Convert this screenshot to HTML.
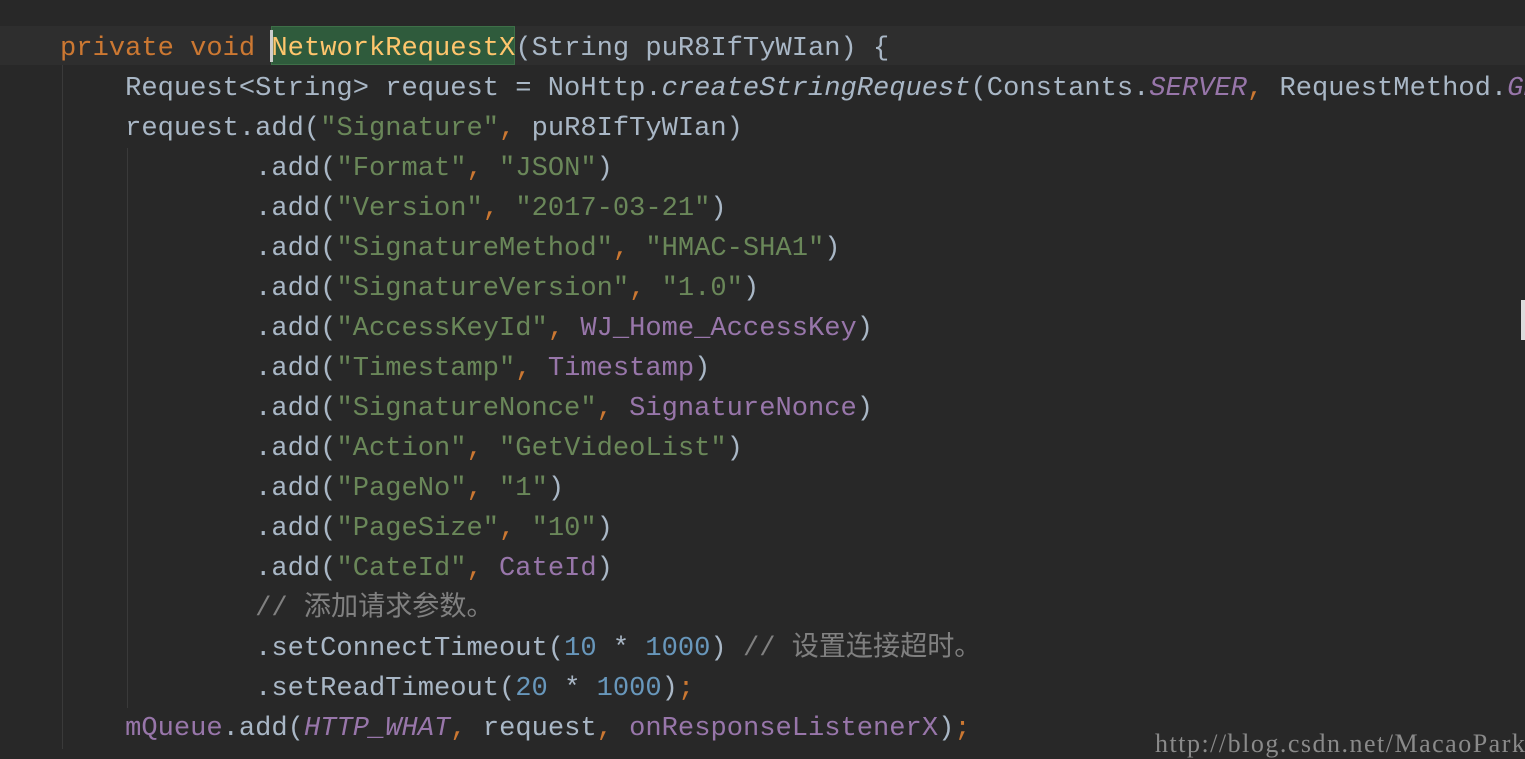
<!DOCTYPE html>
<html><head><meta charset="utf-8"><style>
body{margin:0;width:1525px;height:749px;background:#282828;overflow:hidden;position:relative;font-family:"Liberation Mono","Noto Sans CJK SC",monospace;font-size:27.1px;color:#a9b7c6}
.l{position:absolute;left:-5px;height:40px;line-height:40px;white-space:pre}
.k{color:#cc7832}.s{color:#6a8759}.p{color:#9876aa}.n{color:#6897bb}.c{color:#808080}.i{font-style:italic}
.g{position:absolute;width:1px;background:#3a3a3a}
</style></head><body>
<div style="position:absolute;left:0;top:26px;width:1525px;height:39px;background:#2e2e2e"></div>
<div style="position:absolute;left:271px;top:26px;width:244px;height:39px;background:#2f5b3c;border:1px solid #3e7048;box-sizing:border-box"></div>
<div style="position:absolute;left:270px;top:30px;width:3px;height:32px;background:#ccc"></div>
<div class="g" style="left:62px;top:65px;height:684px"></div>
<div class="g" style="left:127px;top:148px;height:560px"></div>
<div style="position:absolute;left:1521px;top:300px;width:4px;height:40px;background:#ddd"></div>
<div class="l" style="top:29px">    <span class="k">private void </span><span style="color:#ffc66d">NetworkRequestX</span>(String puR8IfTyWIan) {</div>
<div class="l" style="top:69px">        Request&lt;String&gt; request = NoHttp.<span class="i">createStringRequest</span>(Constants.<span class="p i">SERVER</span><span class="k">, </span>RequestMethod.<span class="p i">GET</span>)<span class="k">;</span></div>
<div class="l" style="top:109px">        request.add(<span class="s">"Signature"</span><span class="k">, </span>puR8IfTyWIan)</div>
<div class="l" style="top:149px">                .add(<span class="s">"Format"</span><span class="k">, </span><span class="s">"JSON"</span>)</div>
<div class="l" style="top:189px">                .add(<span class="s">"Version"</span><span class="k">, </span><span class="s">"2017-03-21"</span>)</div>
<div class="l" style="top:229px">                .add(<span class="s">"SignatureMethod"</span><span class="k">, </span><span class="s">"HMAC-SHA1"</span>)</div>
<div class="l" style="top:269px">                .add(<span class="s">"SignatureVersion"</span><span class="k">, </span><span class="s">"1.0"</span>)</div>
<div class="l" style="top:309px">                .add(<span class="s">"AccessKeyId"</span><span class="k">, </span><span class="p">WJ_Home_AccessKey</span>)</div>
<div class="l" style="top:349px">                .add(<span class="s">"Timestamp"</span><span class="k">, </span><span class="p">Timestamp</span>)</div>
<div class="l" style="top:389px">                .add(<span class="s">"SignatureNonce"</span><span class="k">, </span><span class="p">SignatureNonce</span>)</div>
<div class="l" style="top:429px">                .add(<span class="s">"Action"</span><span class="k">, </span><span class="s">"GetVideoList"</span>)</div>
<div class="l" style="top:469px">                .add(<span class="s">"PageNo"</span><span class="k">, </span><span class="s">"1"</span>)</div>
<div class="l" style="top:509px">                .add(<span class="s">"PageSize"</span><span class="k">, </span><span class="s">"10"</span>)</div>
<div class="l" style="top:549px">                .add(<span class="s">"CateId"</span><span class="k">, </span><span class="p">CateId</span>)</div>
<div class="l" style="top:589px">                <span class="c">// 添加请求参数。</span></div>
<div class="l" style="top:629px">                .setConnectTimeout(<span class="n">10</span> * <span class="n">1000</span>) <span class="c">// 设置连接超时。</span></div>
<div class="l" style="top:669px">                .setReadTimeout(<span class="n">20</span> * <span class="n">1000</span>)<span class="k">;</span></div>
<div class="l" style="top:709px">        <span class="p">mQueue</span>.add(<span class="p i">HTTP_WHAT</span><span class="k">, </span>request<span class="k">, </span><span class="p">onResponseListenerX</span>)<span class="k">;</span></div>
<div style="position:absolute;left:1155px;top:729px;font-family:'Liberation Serif',serif;font-size:26px;letter-spacing:1.5px;color:#8a8a8a;white-space:nowrap">http://blog.csdn.net/MacaoPark</div>
</body></html>
